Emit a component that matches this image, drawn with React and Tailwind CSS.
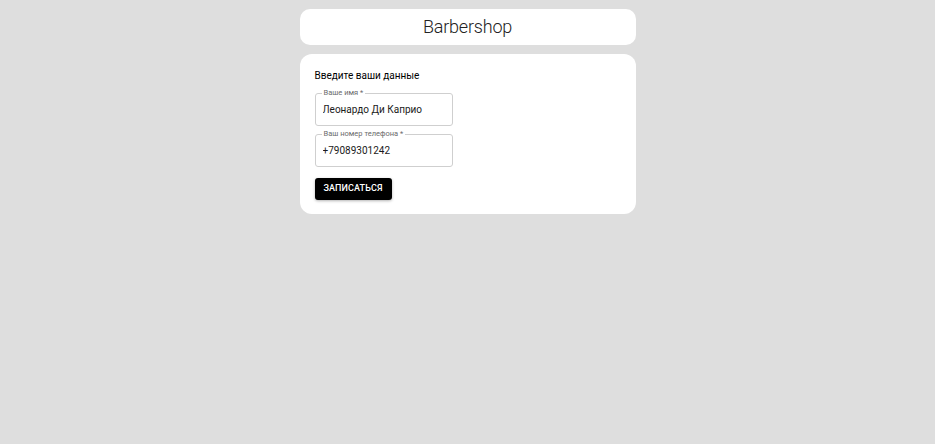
export default function App() {
  return (
    <div
      className="min-h-screen bg-[#dedede] pt-[9px]"
      style={{ fontFamily: "Roboto, 'Noto Sans', sans-serif" }}
    >
      <div className="mx-auto flex w-[336px] flex-col gap-[9px]">
        <header className="flex h-[36px] items-center justify-center rounded-[10px] bg-white">
          <h1 className="text-[18px] font-light leading-none tracking-[-0.2px] text-[#222]">
            Barbershop
          </h1>
        </header>

        <main className="rounded-[12px] bg-white px-[15px] pb-[14px] pt-[15px]">
          <h2 className="text-[10px] leading-[14px] text-black">Введите ваши данные</h2>

          <div className="mt-[10px] flex flex-col gap-[8px]">
            <Field label="Ваше имя *" value="Леонардо Ди Каприо" />
            <Field label="Ваш номер телефона *" value="+79089301242" />
          </div>

          <button
            type="button"
            className="mt-[11px] h-[22px] w-[77px] rounded-[3px] bg-black text-[9px] font-medium uppercase tracking-[0.1px] text-white shadow-[0_1px_3px_rgba(0,0,0,0.3)]"
          >
            Записаться
          </button>
        </main>
      </div>
    </div>
  );
}

function Field({ label, value }) {
  return (
    <div className="relative flex h-[33px] w-[138px] items-center rounded-[3px] border border-[#cfcfcf] px-[7px]">
      <span className="absolute -top-[6px] left-[6px] bg-white px-[2px] text-[7.5px] leading-[10px] text-[#6b6b6b]">
        {label}
      </span>
      <input
        readOnly
        value={value}
        className="block w-full bg-transparent pt-[1px] text-[10px] leading-[14px] text-[#1a1a1a] outline-none"
      />
    </div>
  );
}
